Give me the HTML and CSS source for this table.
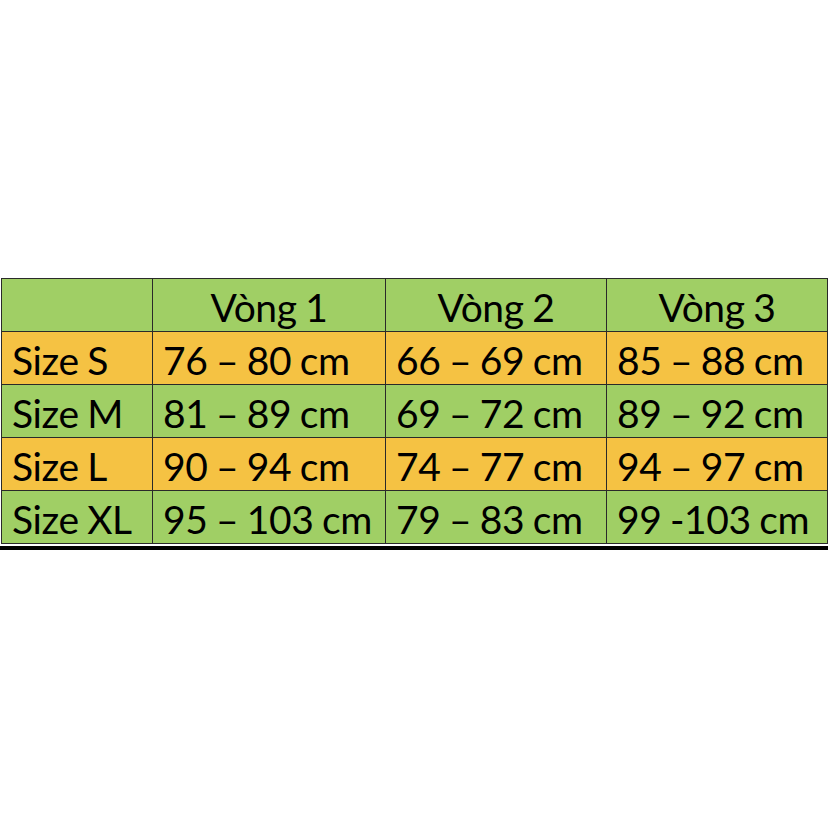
FILE: index.html
```html
<!DOCTYPE html>
<html lang="vi">
<head>
<meta charset="utf-8">
<link rel="stylesheet" href="styles.css">
</head>
<body>
<div class="wrap">
  <table class="sizes">
    <colgroup>
      <col class="c0"><col class="c1"><col class="c2"><col class="c3">
    </colgroup>
    <tr class="green head">
      <td></td><td>Vòng 1</td><td>Vòng 2</td><td>Vòng 3</td>
    </tr>
    <tr class="orange">
      <td>Size S</td><td>76 – 80 cm</td><td>66 – 69 cm</td><td>85 – 88 cm</td>
    </tr>
    <tr class="green">
      <td>Size M</td><td>81 – 89 cm</td><td>69 – 72 cm</td><td>89 – 92 cm</td>
    </tr>
    <tr class="orange">
      <td>Size L</td><td>90 – 94 cm</td><td>74 – 77 cm</td><td>94 – 97 cm</td>
    </tr>
    <tr class="green">
      <td>Size XL</td><td>95 – 103 cm</td><td>79 – 83 cm</td><td>99 -103 cm</td>
    </tr>
  </table>
  <div class="rule"></div>
</div>
</body>
</html>
```
FILE: styles.css
```css
html, body {
  margin: 0;
  padding: 0;
  background: #ffffff;
}
body {
  height: 828px;
  display: flex;
  flex-direction: column;
  justify-content: center;
}
.wrap {
  display: flex;
  flex-direction: column;
}
.sizes {
  border-collapse: collapse;
  table-layout: fixed;
  width: 826px;
  margin-left: 1px;
  font-family: Lato, "Open Sans", sans-serif;
  font-size: 39px;
  letter-spacing: -0.4px;
  word-spacing: -1px;
  color: #000;
}
.c0 { width: 151px; }
.c1 { width: 233px; }
.c2 { width: 221px; }
.c3 { width: 221px; }
.sizes td {
  border: 1px solid #2a2a2a;
  height: 53px;
  padding: 4px 0 0 10px;
  white-space: nowrap;
  line-height: 48px;
  box-sizing: border-box;
}
.head td {
  text-align: center;
  padding-left: 0;
}
.green td { background: #a0cf65; }
.orange td { background: #f5c243; }
.rule {
  height: 4px;
  background: #000;
  margin-top: 2px;
  width: 828px;
}
```
